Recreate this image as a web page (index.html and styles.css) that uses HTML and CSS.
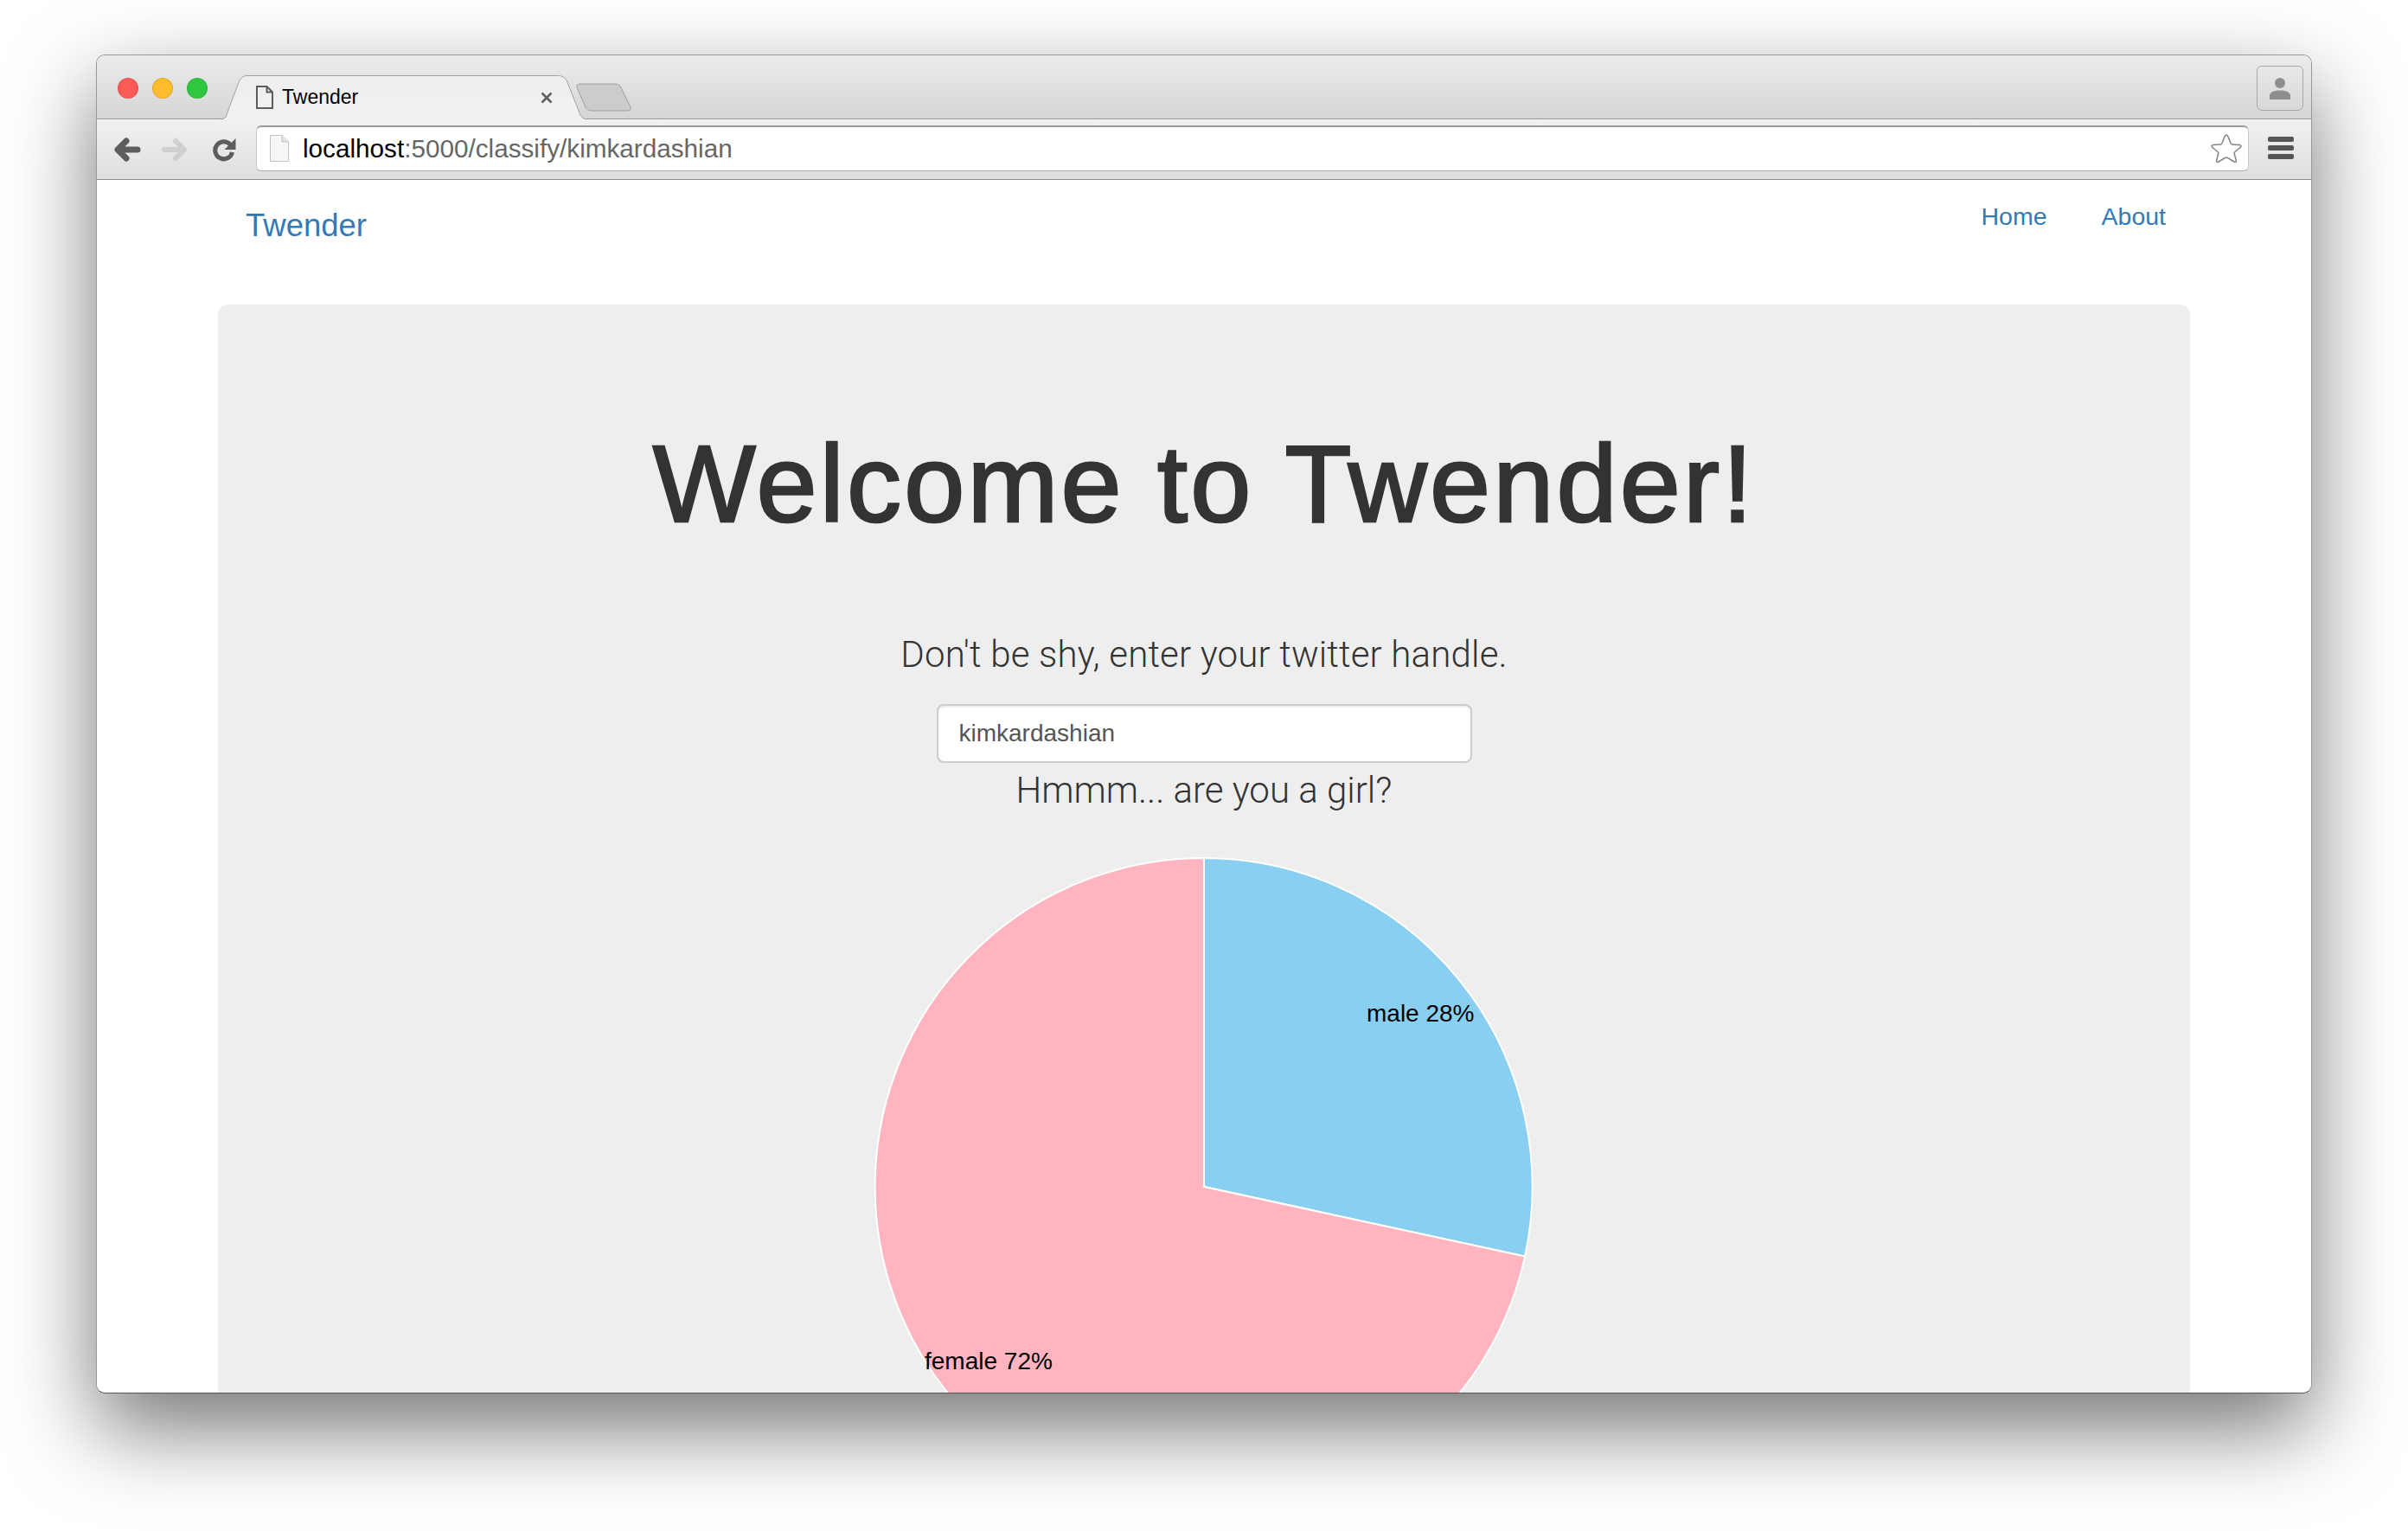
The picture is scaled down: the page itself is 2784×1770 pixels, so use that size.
FILE: index.html
```html
<!DOCTYPE html>
<html lang="en">
<head>
    <meta charset="UTF-8">
    <title>Twender</title>
    <link rel="stylesheet" href="styles.css">
</head>
<body>
    <div class="window">
        <div class="titlebar">
            <div class="lights">
                <span class="light red"></span>
                <span class="light yellow"></span>
                <span class="light green"></span>
            </div>
            <div class="tab">
                <svg class="tab-shape" width="418" height="51" viewBox="0 0 418 51">
                    <defs>
                        <linearGradient id="tabfill" x1="0" y1="0" x2="0" y2="1">
                            <stop offset="0" stop-color="#eeeeee"/>
                            <stop offset="1" stop-color="#f1f1f1"/>
                        </linearGradient>
                    </defs>
                    <path d="M0 50 C3 50 4 47 5 43 L18 8 C20 3 23 .5 28 .5 H387 C392 .5 396 3 398 8 L411 41 C413 47 415 50 418 50 V51 H0 Z" fill="url(#tabfill)"/>
                    <path d="M0 50 C3 50 4 47 5 43 L18 8 C20 3 23 .5 28 .5 H387 C392 .5 396 3 398 8 L411 41 C413 47 415 50 418 50" fill="none" stroke="#a2a2a2" stroke-width="1"/>
                </svg>
                <svg class="doc-icon" width="20" height="27" viewBox="0 0 20 27">
                    <path d="M1 1 H12.5 L19 7.5 V26 H1 Z M12.5 1 V7.5 H19" fill="none" stroke="#5c5c5c" stroke-width="2"/>
                </svg>
                <span class="tab-title">Twender</span>
                <svg class="tab-close" width="14" height="14" viewBox="0 0 14 14">
                    <path d="M1.5 1.5 L12.5 12.5 M12.5 1.5 L1.5 12.5" stroke="#5f5f5f" stroke-width="2.6"/>
                </svg>
            </div>
            <svg class="new-tab" width="64" height="33" viewBox="0 0 64 33">
                <path d="M1 5 C.5 2 2 1 5 1 H45 C49 1 51 3 52 5 L63 28 C64 31 62 32 59 32 H18 C14 32 12 30 11 28 Z" fill="#cccccc" stroke="#a0a0a0" stroke-width="1"/>
            </svg>
            <div class="profile">
                <svg width="24" height="26" viewBox="0 0 24 26">
                    <circle cx="12" cy="7" r="6" fill="#8e8e8e"/>
                    <path d="M0 26 V22 C0 17 6 15.5 12 15.5 C18 15.5 24 17 24 22 V26 Z" fill="#8e8e8e"/>
                </svg>
            </div>
        </div>

        <div class="toolbar">
            <svg class="back" width="32" height="28" viewBox="0 0 32 28">
                <path d="M28 14 H6 M15 4 L5 14 L15 24" fill="none" stroke="#5d5d5d" stroke-width="7" stroke-linecap="round" stroke-linejoin="round"/>
            </svg>
            <svg class="forward" width="32" height="28" viewBox="0 0 32 28">
                <path d="M4 14 H26 M17 4 L27 14 L17 24" fill="none" stroke="#cfcfcf" stroke-width="6" stroke-linecap="round" stroke-linejoin="round"/>
            </svg>
            <svg class="reload" width="28" height="28" viewBox="0 0 28 28">
                <path d="M21.5 8.5 A10 10 0 1 0 23.5 17" fill="none" stroke="#5d5d5d" stroke-width="5"/>
                <path d="M27.5 1 V14 H14.5 Z" fill="#5d5d5d"/>
            </svg>
            <div class="urlbar">
                <svg width="22" height="31" viewBox="0 0 22 31">
                    <path d="M.5 .5 H14 L21.5 8 V30.5 H.5 Z" fill="#f6f6f6" stroke="#c2c2c2"/>
                    <path d="M14 .5 V8 H21.5" fill="#e4e4e4" stroke="#c2c2c2"/>
                </svg>
                <span class="url"><span class="host">localhost</span>:5000/classify/kimkardashian</span>
                <svg class="star" width="36" height="35" viewBox="0 0 36 35">
                    <path d="M18 2 C19 2 19.500 3 20 4 L23 11.500 C23.500 12.500 24 13 25 13 L33 13.500 C35 13.800 35.500 15 34 16.500 L28 21.500 C27.200 22.200 27 23 27.300 24 L29.300 31.500 C29.800 33.500 28.500 34 27 33 L20 28.800 C18.800 28 17.200 28 16 28.800 L9 33 C7.500 34 6.200 33.500 6.700 31.500 L8.700 24 C9 23 8.800 22.200 8 21.500 L2 16.500 C.5 15 1 13.800 3 13.500 L11 13 C12 13 12.500 12.500 13 11.500 L16 4 C16.500 3 17 2 18 2 Z" fill="#fff" stroke="#888" stroke-width="1.600"/>
                </svg>
            </div>
            <div class="menu">
                <span></span>
                <span></span>
                <span></span>
            </div>
        </div>

        <div class="page">
            <nav class="navbar">
                <a class="brand">Twender</a>
                <div class="nav-links">
                    <a>Home</a>
                    <a>About</a>
                </div>
            </nav>
            <div class="jumbotron">
                <h1>Welcome to Twender!</h1>
                <p class="lead">Don't be shy, enter your twitter handle.</p>
                <input class="handle" type="text" value="kimkardashian">
                <p class="lead result">Hmmm... are you a girl?</p>
                <svg class="pie" width="764" height="764" viewBox="0 0 764 764">
                    <path d="M382 382 V2 A380 380 0 0 1 753 462.600 Z" fill="#89cff1" stroke="#fff" stroke-width="2"/>
                    <path d="M382 382 L753 462.600 A380 380 0 1 1 382 2 Z" fill="#ffb4c0" stroke="#fff" stroke-width="2"/>
                    <text x="570" y="191">male 28%</text>
                    <text x="59" y="593">female 72%</text>
                </svg>
            </div>
        </div>
    </div>
</body>
</html>
```

FILE: styles.css
```css
html, body {
    margin: 0;
    height: 100%;
    overflow: hidden;
    background-color: #fff;
}

body {
    font-family: "Liberation Sans", Arial, sans-serif;
    color: #333;
}

.window {
    box-sizing: border-box;
    width: 2562px;
    height: 1548px;
    margin: 63px 0 0 111px;
    border: 1px solid #999;
    border-bottom-color: #555;
    border-radius: 10px;
    overflow: hidden;
    background-color: #fff;
    box-shadow: 0 40px 100px rgba(0, 0, 0, 0.55);
}

/* title bar with the tab strip */
.titlebar {
    box-sizing: border-box;
    display: flex;
    height: 74px;
    padding-left: 24px;
    border-bottom: 1px solid #9a9a9a;
    background: linear-gradient(#ececec, #d5d5d5);
}

.lights {
    display: flex;
    gap: 16px;
    margin-top: 26px;
}

.light {
    box-sizing: border-box;
    width: 24px;
    height: 24px;
    border-radius: 50%;
    border: 1px solid rgba(0, 0, 0, 0.1);
}

.red { background-color: #fc5b57; }
.yellow { background-color: #fdbb2e; }
.green { background-color: #2ec840; }

.tab {
    position: relative;
    z-index: 1;
    display: flex;
    align-items: center;
    flex-shrink: 0;
    box-sizing: border-box;
    width: 418px;
    height: 51px;
    margin: 23px 0 0 18px;
    padding: 0 37px 0 38px;
}

.tab-shape {
    position: absolute;
    top: 0;
    left: 0;
}

.doc-icon,
.tab-title,
.tab-close {
    position: relative;
}

.tab-title {
    margin-left: 10px;
    font-size: 23px;
    color: #000;
}

.tab-close {
    margin-left: auto;
}

.new-tab {
    flex-shrink: 0;
    margin: 32px 0 0 -10px;
}

.profile {
    box-sizing: border-box;
    display: flex;
    align-items: center;
    justify-content: center;
    width: 54px;
    height: 52px;
    margin: 12px 9px 0 auto;
    border: 1px solid #a8a8a8;
    border-radius: 6px;
}

/* address bar row */
.toolbar {
    box-sizing: border-box;
    display: flex;
    align-items: center;
    height: 70px;
    padding-left: 19px;
    border-bottom: 1px solid #8a8a8a;
    background: linear-gradient(#f1f1f1, #dedede);
}

.forward { margin-left: 23px; }
.reload { margin-left: 27px; }

.urlbar {
    box-sizing: border-box;
    display: flex;
    align-items: center;
    width: 2304px;
    height: 53px;
    margin: 0 0 3px 23px;
    padding: 0 7px 0 15px;
    border: 1px solid #c8c8c8;
    border-top: 2px solid #9c9c9c;
    border-bottom-color: #aaa;
    border-radius: 6px;
    background-color: #fff;
}

.url {
    margin-left: 16px;
    font-size: 29.7px;
    color: #666;
}

.host {
    color: #000;
}

.star {
    margin-left: auto;
}

.menu {
    display: flex;
    flex-direction: column;
    gap: 4px;
    margin: 0 0 3px 22px;
}

.menu span {
    display: block;
    width: 30px;
    height: 6px;
    border-radius: 2px;
    background-color: #555;
}

/* page inside the browser */
.navbar {
    box-sizing: border-box;
    display: flex;
    justify-content: space-between;
    align-items: flex-start;
    width: 2280px;
    height: 144px;
    margin: 0 auto;
    padding: 0 28px 0 32px;
}

.navbar a {
    color: #337ab7;
}

.brand {
    margin-top: 28px;
    font-size: 36.5px;
    line-height: 50px;
}

.nav-links {
    display: flex;
    gap: 63px;
    margin-top: 22px;
    font-size: 28.5px;
    line-height: 40px;
}

.jumbotron {
    box-sizing: border-box;
    width: 2280px;
    height: 1400px;
    margin: 0 auto;
    padding-top: 138px;
    border-radius: 12px;
    background-color: #eee;
    text-align: center;
}

h1 {
    margin: 0;
    font-size: 126px;
    line-height: 140px;
    font-weight: 400;
    letter-spacing: 3.2px;
    -webkit-text-stroke: 2.6px #333;
}

.lead {
    margin: 97px 0 0;
    font-size: 42px;
    line-height: 60px;
    letter-spacing: 0.17px;
    font-family: Roboto, "Liberation Sans", sans-serif;
    font-weight: 300;
}

.handle {
    box-sizing: border-box;
    display: block;
    width: 619px;
    height: 68px;
    margin: 27px auto 0;
    padding: 0 24px;
    border: 2px solid #ccc;
    border-radius: 8px;
    background-color: #fff;
    font-family: "Liberation Sans", Arial, sans-serif;
    font-size: 28px;
    color: #555;
    box-shadow: inset 0 2px 2px rgba(0, 0, 0, 0.07);
}

.lead.result {
    margin-top: 2px;
    letter-spacing: 0;
}

.pie {
    display: block;
    margin: 46px auto 0;
}

.pie text {
    font-size: 28px;
    fill: #000;
}
```
